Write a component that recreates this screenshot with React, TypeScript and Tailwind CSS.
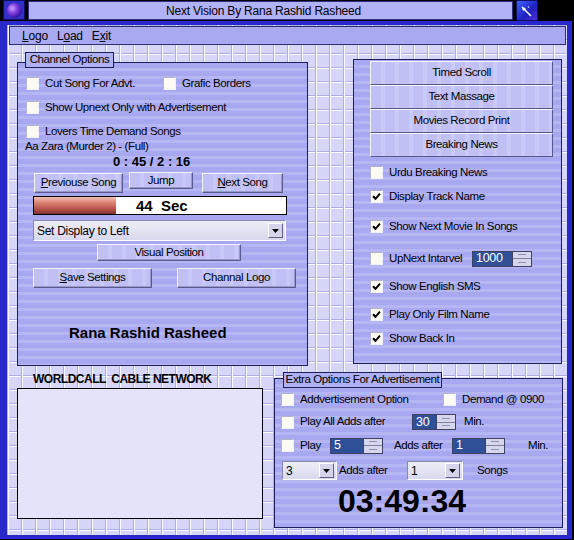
import React from "react";

const grid =
  "bg-[#d6d6f7] bg-[linear-gradient(to_right,#aeaee0_0px,#aeaee0_1px,#fafaff_1px,#fafaff_2px,transparent_2px),linear-gradient(to_bottom,#aeaee0_0px,#aeaee0_1px,#fafaff_1px,#fafaff_2px,transparent_2px)] bg-[size:14px_14px]";
const stripes =
  "bg-[#aaaaf2] bg-[repeating-linear-gradient(to_bottom,#a8a8f1_0px,#a8a8f1_5px,#b6b6f5_5px,#b6b6f5_8px)]";
const arial = "font-['Liberation_Sans',Arial,sans-serif]";
const lbl = "text-[11.5px] tracking-[-0.4px] leading-none";

function Check({ checked = false }: { checked?: boolean }) {
  return (
    <div className="w-[13px] h-[13px] shrink-0 bg-[#fbfbf3] border border-t-[#b4b4c8] border-l-[#b4b4c8] border-r-[#f0f0f8] border-b-[#f0f0f8] flex items-center justify-center">
      {checked && (
        <svg width="9" height="9" viewBox="0 0 9 9">
          <path d="M1 4.2 L3.5 6.8 L8 1.6" stroke="black" strokeWidth="2" fill="none" />
        </svg>
      )}
    </div>
  );
}

function CheckRow({ label, checked = false, className = "" }: { label: string; checked?: boolean; className?: string }) {
  return (
    <div className={`flex items-center h-[13px] ${className}`}>
      <Check checked={checked} />
      <span className={`ml-[6px] ${lbl} whitespace-nowrap`}>{label}</span>
    </div>
  );
}

function Btn({ children, className = "" }: { children: React.ReactNode; className?: string }) {
  return (
    <div
      className={`flex items-center justify-center ${lbl} bg-[#c3c3f6] bg-[repeating-linear-gradient(to_right,#c0c0f5_0px,#c0c0f5_10px,#c8c8f8_10px,#c8c8f8_14px)] border border-t-[#f4f4ff] border-l-[#f4f4ff] border-r-[#5a5a8e] border-b-[#5a5a8e] shadow-[inset_-1px_-1px_0_#9898c8] whitespace-nowrap ${className}`}
    >
      {children}
    </div>
  );
}

function Spinner({ value, w }: { value: string; w: string }) {
  return (
    <div className={`flex h-[16px] shrink-0 border border-[#404060] bg-[#c8c8e6] ${w}`}>
      <div className="flex-1 bg-[#2f4f97] text-white text-[12.5px] tracking-[-0.3px] leading-none pl-[3px] flex items-center border-r border-[#404060]">
        {value}
      </div>
      <div className="w-[18px] flex flex-col">
        <div className="flex-1 bg-[#d6d6ec] border-b border-[#8080a0] flex items-center justify-center">
          <div className="w-[8px] h-[1px] bg-[#9090b0]" />
        </div>
        <div className="flex-1 bg-[#d6d6ec] flex items-center justify-center">
          <div className="w-[8px] h-[1px] bg-[#9090b0]" />
        </div>
      </div>
    </div>
  );
}

function Combo({ value, w, h = "h-[19px]" }: { value: string; w: string; h?: string }) {
  return (
    <div
      className={`flex items-center shrink-0 bg-[linear-gradient(to_bottom,#eeeef8,#d8d8ee)] border border-t-[#8888a8] border-l-[#8888a8] border-r-white border-b-white ${w} ${h}`}
    >
      <div className="flex-1 pl-[3px] text-[12px] tracking-[-0.3px] leading-none whitespace-nowrap">{value}</div>
      <div className="w-[15px] h-[15px] mr-[2px] bg-[#d4d4ea] border border-t-white border-l-white border-r-[#606080] border-b-[#606080] flex items-center justify-center">
        <svg width="7" height="4" viewBox="0 0 7 4">
          <path d="M0 0 H7 L3.5 4 Z" fill="black" />
        </svg>
      </div>
    </div>
  );
}

export default function App() {
  return (
    <div className={`w-[574px] h-[540px] bg-black overflow-hidden text-black ${arial}`}>
      {/* Title row */}
      <div className="flex items-start h-[21px]">
        <div className="ml-[3px] w-[22px] h-[20px] bg-[#3030c8] border border-[#101060] flex items-center justify-center">
          <div className="w-[15px] h-[15px] rounded-full bg-[radial-gradient(circle_at_35%_35%,#d0a0ff_0%,#8040e0_35%,#3010a0_75%,#100060_100%)]" />
        </div>
        <div className="ml-[3px] mt-[1px] w-[485px] h-[19px] pr-[14px] bg-[#b2b2f6] border border-[#303080] flex items-center justify-center text-[12px] tracking-[-0.2px] leading-none">
          Next Vision By Rana Rashid Rasheed
        </div>
        <div className="ml-[3px] w-[22px] h-[21px] bg-[linear-gradient(135deg,#4060ff,#2020c0_60%,#5030d0)] border border-[#101060] flex items-center justify-center">
          <svg width="16" height="16" viewBox="0 0 16 16">
            <path d="M3 4 L12 13" stroke="#e8f0ff" strokeWidth="1.6" />
            <circle cx="5" cy="6" r="1.6" fill="white" />
            <path d="M9 3 L10 5" stroke="#b0d0ff" strokeWidth="1" />
          </svg>
        </div>
      </div>

      {/* Window */}
      <div className="w-[572px] h-[518px] bg-[#2828cc] pl-[7px] pt-[4px] pr-[5px] pb-[4px]">
        <div className={`w-full h-full ${grid} flex flex-col`}>
          {/* Menu bar */}
          <div className="ml-[2px] mt-[1px] w-[557px] h-[19px] shrink-0 bg-[#a9a9f1] border border-[#303070] flex items-center text-[12px] tracking-[-0.2px] leading-none">
            <span className="ml-[12px]">
              <u>L</u>ogo
            </span>
            <span className="ml-[9px]">
              L<u>o</u>ad
            </span>
            <span className="ml-[9px]">
              E<u>x</u>it
            </span>
          </div>

          {/* Top row */}
          <div className="flex items-start shrink-0">
            {/* Channel options */}
            <div className={`relative ml-[10px] mt-[17px] w-[291px] h-[304px] border border-[#1e1e58] ${stripes} flex flex-col`}>
              <div className={`absolute left-[7px] top-[-11px] w-[89px] h-[16px] border border-[#1e1e58] bg-[#b0b0f4] flex items-center justify-center ${lbl} whitespace-nowrap`}>
                Channel Options
              </div>
              <div className="mt-[14px] ml-[8px] flex items-center">
                <div className="w-[137px]">
                  <CheckRow label="Cut Song For Advt." />
                </div>
                <CheckRow label="Grafic Borders" />
              </div>
              <CheckRow className="mt-[11px] ml-[8px]" label="Show Upnext Only with Advertisement" />
              <CheckRow className="mt-[11px] ml-[8px]" label="Lovers Time Demand Songs" />
              <div className={`mt-[2px] ml-[7px] h-[14px] ${lbl} flex items-center`}>Aa Zara (Murder 2) - (Full)</div>
              <div className="mt-[1px] ml-[95px] h-[14px] text-[13px] leading-[14px] font-bold">0 : 45 / 2 : 16</div>
              <div className="mt-[3px] h-[21px] flex items-start">
                <Btn className="ml-[16px] mt-[1px] w-[89px] h-[20px]">
                  <span>
                    <u>P</u>reviouse Song
                  </span>
                </Btn>
                <Btn className="ml-[6px] w-[64px] h-[17px]">Jump</Btn>
                <Btn className="ml-[9px] mt-[1px] w-[81px] h-[20px]">
                  <span>
                    <u>N</u>ext Song
                  </span>
                </Btn>
              </div>
              <div className="mt-[3px] ml-[15px] w-[254px] h-[19px] border border-black bg-white flex">
                <div className="w-[82px] h-full bg-[linear-gradient(to_bottom,#f4c0b8_0%,#e08878_30%,#c05850_65%,#803030_100%)]" />
                <div className="flex-1 flex items-center font-bold text-[15px] leading-none pl-[20px] whitespace-pre">44  Sec</div>
              </div>
              <Combo value="Set Display to Left" w="ml-[15px] mt-[5px] w-[253px]" h="h-[21px]" />
              <Btn className="mt-[3px] ml-[79px] w-[144px] h-[17px]">Visual Position</Btn>
              <div className="mt-[7px] flex h-[20px]">
                <Btn className="ml-[15px] w-[119px] h-[20px]">
                  <span>
                    <u>S</u>ave Settings
                  </span>
                </Btn>
                <Btn className="ml-[25px] w-[119px] h-[20px]">Channal Logo</Btn>
              </div>
              <div className="mt-[36px] ml-[51px] font-bold text-[15px] leading-[17px]">Rana Rashid Rasheed</div>
            </div>

            {/* Right panel */}
            <div className={`ml-[45px] mt-[14px] w-[209px] h-[305px] border border-[#1e1e58] ${stripes} flex flex-col`}>
              <div className="mt-[1px] ml-[16px] w-[183px] flex flex-col">
                {["Timed Scroll", "Text Massage", "Movies Record Print", "Breaking News"].map((t) => (
                  <div
                    key={t}
                    className={`h-[24px] flex items-center justify-center ${lbl} bg-[#c4c4f6] bg-[repeating-linear-gradient(to_right,#c0c0f5_0px,#c0c0f5_10px,#cacaf8_10px,#cacaf8_14px)] border border-t-[#f4f4ff] border-l-[#f4f4ff] border-r-[#58588c] border-b-[#58588c]`}
                  >
                    {t}
                  </div>
                ))}
              </div>
              <CheckRow className="mt-[9px] ml-[16px]" label="Urdu Breaking News" />
              <CheckRow className="mt-[11px] ml-[16px]" label="Display Track Name" checked />
              <CheckRow className="mt-[17px] ml-[16px]" label="Show Next Movie In Songs" checked />
              <div className="mt-[19px] ml-[16px] h-[13px] flex items-center">
                <div className="w-[102px]">
                  <CheckRow label="UpNext Intarvel" />
                </div>
                <Spinner value="1000" w="w-[60px]" />
              </div>
              <CheckRow className="mt-[15px] ml-[16px]" label="Show English SMS" checked />
              <CheckRow className="mt-[15px] ml-[16px]" label="Play Only Film Name" checked />
              <CheckRow className="mt-[11px] ml-[16px]" label="Show Back In" checked />
            </div>
          </div>

          {/* Bottom row */}
          <div className="flex items-start">
            <div className="ml-[10px] w-[246px] flex flex-col">
              <div className="mt-[6px] h-[15px] pl-[16px] font-bold text-[12px] leading-[15px] tracking-[-0.5px] whitespace-pre">
                WORLDCALL  CABLE NETWORK
              </div>
              <div className="mt-[1px] h-[131px] border border-black bg-[#e3e3fa]" />
            </div>

            <div className={`relative ml-[11px] mt-[12px] w-[289px] h-[150px] border border-[#1e1e58] ${stripes} flex flex-col`}>
              <div className={`absolute left-[8px] top-[-7px] w-[159px] h-[16px] border border-[#1e1e58] bg-[#b0b0f4] flex items-center justify-center ${lbl} whitespace-nowrap`}>
                Extra Options For Advertisement
              </div>
              <div className="mt-[14px] ml-[6px] flex items-center h-[13px]">
                <div className="w-[162px]">
                  <CheckRow label="Addvertisement Option" />
                </div>
                <CheckRow label="Demand @ 0900" />
              </div>
              <div className="mt-[8px] ml-[6px] flex items-center h-[16px]">
                <div className="w-[131px]">
                  <CheckRow label="Play All Adds after" />
                </div>
                <Spinner value="30" w="w-[44px]" />
                <span className={`ml-[8px] ${lbl}`}>Min.</span>
              </div>
              <div className="mt-[7px] ml-[6px] flex items-center h-[17px]">
                <div className="w-[49px]">
                  <CheckRow label="Play" />
                </div>
                <Spinner value="5" w="w-[53px]" />
                <div className={`w-[69px] pl-[11px] ${lbl} whitespace-nowrap`}>Adds after</div>
                <Spinner value="1" w="w-[53px]" />
                <span className={`ml-[23px] ${lbl}`}>Min.</span>
              </div>
              <div className="mt-[7px] ml-[7px] flex items-center h-[19px]">
                <Combo value="3" w="w-[55px]" />
                <div className={`w-[70px] pl-[2px] ${lbl} whitespace-nowrap`}>Adds after</div>
                <Combo value="1" w="w-[56px]" />
                <span className={`ml-[14px] ${lbl}`}>Songs</span>
              </div>
              <div className="mt-[5px] ml-[63px] font-bold text-[32px] leading-[32px]">03:49:34</div>
            </div>
          </div>
        </div>
      </div>
    </div>
  );
}
